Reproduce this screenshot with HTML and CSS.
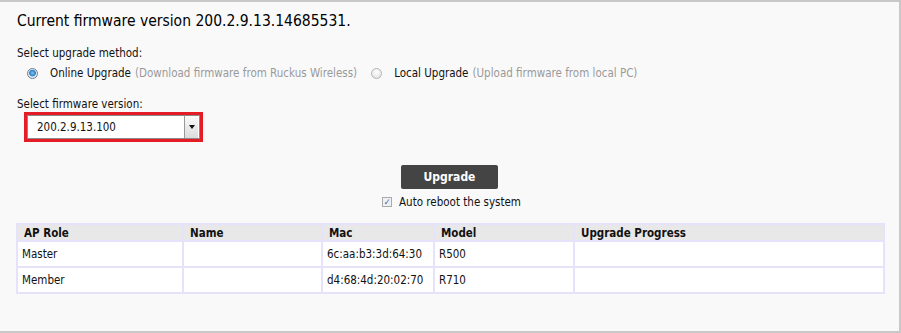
FILE: index.html
```html
<!DOCTYPE html>
<html lang="en">
<head>
    <meta charset="UTF-8">
    <title>Firmware Upgrade</title>
    <link rel="stylesheet" href="styles.css">
</head>
<body>
    <div class="panel">
        <h1>Current firmware version 200.2.9.13.14685531.</h1>

        <div class="label">Select upgrade method:</div>
        <div class="methods">
            <label class="method">
                <span class="radio checked"></span>
                Online Upgrade <span class="hint">(Download firmware from Ruckus Wireless)</span>
            </label>
            <label class="method">
                <span class="radio"></span>
                Local Upgrade <span class="hint">(Upload firmware from local PC)</span>
            </label>
        </div>

        <div class="label label-version">Select firmware version:</div>
        <div class="highlight">
            <div class="select">
                <span class="select-value">200.2.9.13.100</span>
                <span class="select-btn"><span class="caret"></span></span>
            </div>
        </div>

        <div class="actions">
            <button class="btn-upgrade">Upgrade</button>
            <label class="reboot"><span class="check">&#10003;</span> Auto reboot the system</label>
        </div>

        <table class="aps">
            <thead>
                <tr>
                    <th class="c-role">AP Role</th>
                    <th class="c-name">Name</th>
                    <th class="c-mac">Mac</th>
                    <th class="c-model">Model</th>
                    <th>Upgrade Progress</th>
                </tr>
            </thead>
            <tbody>
                <tr><td>Master</td><td></td><td>6c:aa:b3:3d:64:30</td><td>R500</td><td></td></tr>
                <tr><td>Member</td><td></td><td>d4:68:4d:20:02:70</td><td>R710</td><td></td></tr>
            </tbody>
        </table>
    </div>
</body>
</html>
```

FILE: styles.css
```css
* { margin: 0; padding: 0; box-sizing: border-box; }
body { font-family: "DejaVu Sans Condensed", "DejaVu Sans", sans-serif; font-size: 11px; color: #111; background: #fff; }

.panel {
    width: 901px; height: 333px; background: #f9f9f9;
    border: 2px solid #c8c8c8; border-left: none;
    padding: 8px 0 0 17px;
}
h1 { font-size: 15.5px; font-weight: normal; color: #000; height: 30px; line-height: 23px; }

.label { font-size: 11.5px; line-height: 16px; margin-top: 5px; }
.methods { display: flex; gap: 14px; padding-left: 10px; margin-top: 2px; height: 20px; align-items: center; }
.method { display: flex; align-items: center; font-size: 11.5px; }
.hint { color: #999; margin-left: 4px; }

.radio {
    width: 11px; height: 11px; border-radius: 50%; margin-right: 12px;
    border: 1px solid #b5b5b5; background: radial-gradient(circle at 50% 35%, #fff, #ddd);
}
.radio.checked {
    border-color: #6e7f8f;
    background: radial-gradient(circle at 50% 45%, #7fc4ee 0, #2c7fc4 45%, #dfe6ee 55%, #eef1f4 100%);
}

.label-version { margin-top: 13px; }
.highlight {
    width: 179px; height: 30px; margin: 0 0 0 7px;
    border: 3px solid #e31c26; background: #fff;
}
.select {
    display: flex; height: 24px; border: 1px solid #8a8a8a; background: #fff;
    align-items: center; font-size: 11.5px;
}
.select-value { flex: 1; padding-left: 9px; }
.select-btn {
    width: 14px; height: 22px; margin-right: 1px; border-left: 1px solid #999;
    background: linear-gradient(#fafafa, #dcdcdc);
    display: flex; align-items: center; justify-content: center;
}
.caret { border-left: 3px solid transparent; border-right: 3px solid transparent; border-top: 4px solid #111; }

.actions { display: flex; flex-direction: column; align-items: center; margin-top: 23px; padding-right: 17px; }
.btn-upgrade {
    width: 97px; height: 24px; border: none; border-radius: 2px;
    background: #444; color: #fff; font-family: inherit; font-size: 12px; font-weight: bold;
}
.reboot { display: flex; align-items: center; gap: 7px; margin-top: 6px; font-size: 11.5px; margin-left: 4px; }
.check {
    width: 10px; height: 10px; border: 1px solid #aaa; background: #eef0f4;
    font-size: 9px; line-height: 8px; text-align: center; color: #4a5ea8;
}

.aps {
    width: 869px; margin: 14px 0 0 -1px; border-collapse: collapse; background: #fff;
    font-size: 11.5px;
}
.aps th, .aps td { border: 2px solid #e6e2fa; text-align: left; }
.aps th { background: #e8e8e8; font-weight: bold; height: 17px; padding: 0 6px; }
.aps td { height: 26px; padding: 0 4px; }
.c-role { width: 166px; }
.c-name { width: 139px; }
.c-mac { width: 112px; }
.c-model { width: 140px; }
```
